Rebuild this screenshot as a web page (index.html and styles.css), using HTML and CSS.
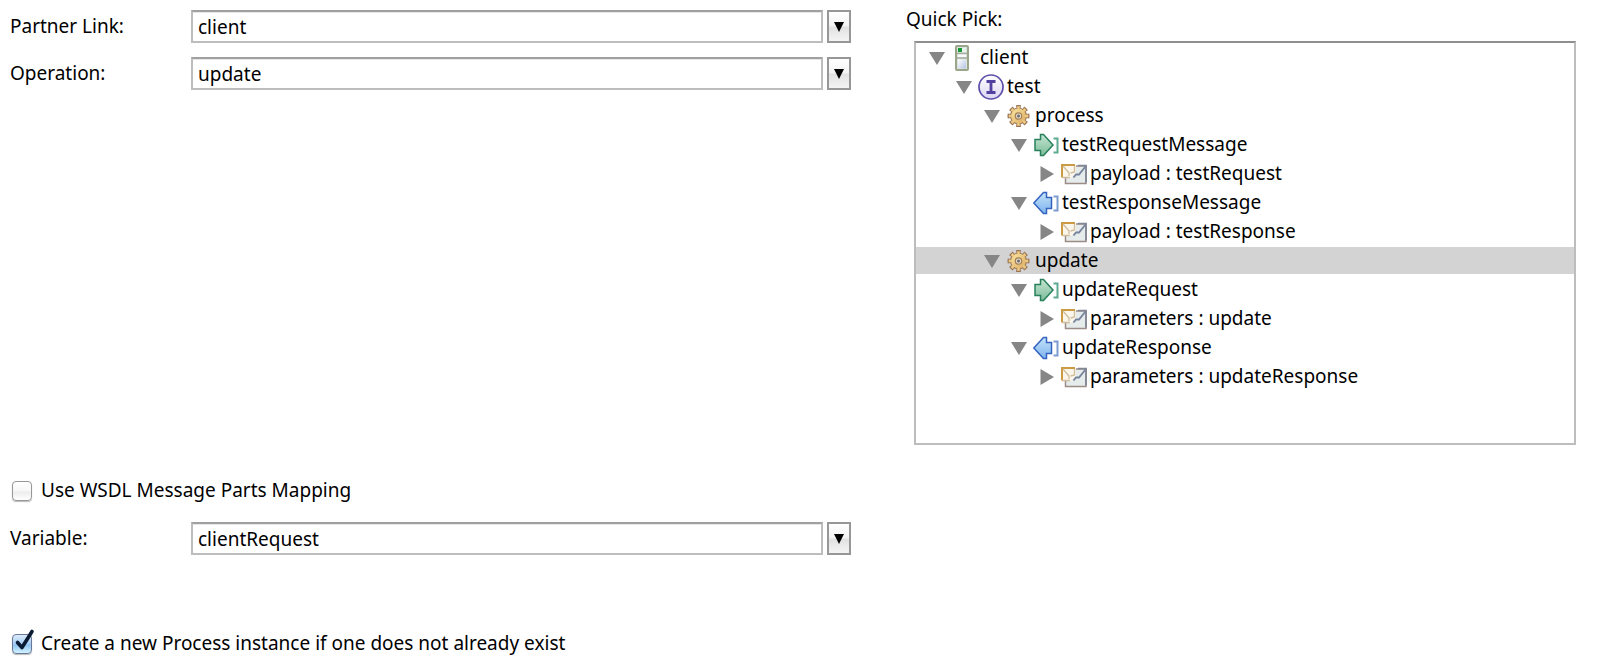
FILE: index.html
```html
<!DOCTYPE html>
<html lang="en">
<head>
<meta charset="utf-8">
<title>Receive Properties</title>
<link rel="stylesheet" href="styles.css">
</head>
<body>
<svg class="defs" aria-hidden="true">
  <defs>
    <linearGradient id="g-green" x1="0" y1="0" x2="0" y2="1"><stop offset="0" stop-color="#c4e4d0"/><stop offset="1" stop-color="#7dbd9b"/></linearGradient>
    <linearGradient id="g-blue" x1="0" y1="0" x2="0" y2="1"><stop offset="0" stop-color="#c3e3fa"/><stop offset="1" stop-color="#7fb2ee"/></linearGradient>
    <linearGradient id="g-gold" x1="0" y1="0" x2="1" y2="1"><stop offset="0" stop-color="#fbe9a6"/><stop offset="1" stop-color="#dba75c"/></linearGradient>
    <linearGradient id="g-lilac" x1="0" y1="0" x2="0" y2="1"><stop offset="0" stop-color="#ffffff"/><stop offset="1" stop-color="#dcd6f2"/></linearGradient>
    <linearGradient id="g-server" x1="0" y1="0" x2="1" y2="1"><stop offset="0" stop-color="#ffffff"/><stop offset="1" stop-color="#b4c3e4"/></linearGradient>
    <symbol id="open" viewBox="0 0 16 14"><path d="M0 1h16L8 14z" fill="#868686"/></symbol>
    <symbol id="closed" viewBox="0 0 16 16"><path d="M1.500 0v16l13.500-8z" fill="#868686"/></symbol>
    <symbol id="server" viewBox="0 0 26 26">
      <rect x="5" y="1" width="12" height="24" rx="1" fill="#dde3df" stroke="#9ba58a" stroke-width="2"/>
      <rect x="7" y="3" width="8" height="4" fill="#e9f2ed"/><rect x="7" y="3" width="4" height="4" fill="#179a36"/>
      <path d="M6 8.500h10M6 13h10" stroke="#a2ae9c" stroke-width="1.300"/>
      <rect x="7" y="9.500" width="8" height="2.500" fill="#f8faff"/>
      <rect x="7" y="14.500" width="8" height="9" fill="url(#g-server)"/>
    </symbol>
    <symbol id="interface" viewBox="0 0 26 26">
      <circle cx="13" cy="13" r="12" fill="url(#g-lilac)" stroke="#5c4faa" stroke-width="1.700"/>
      <path d="M8.500 7.500h9M8.500 18.500h9M13 7.500v11" fill="none" stroke="#51409f" stroke-width="2.800"/>
    </symbol>
    <symbol id="gear" viewBox="0 0 26 26">
      <circle cx="12.500" cy="13" r="9" pathLength="16" fill="none" stroke="#9b7355" stroke-width="4" stroke-dasharray="1.240 .760" stroke-dashoffset=".620"/>
      <circle cx="12.500" cy="13" r="8" fill="url(#g-gold)" stroke="#a37b58" stroke-width="1.200"/>
      <circle cx="12.500" cy="13" r="8.200" pathLength="16" fill="none" stroke="#ebca84" stroke-width="3.200" stroke-dasharray=".800 1.200" stroke-dashoffset=".400"/>
      <circle cx="12.500" cy="13" r="3.200" fill="#e6dccb" stroke="#a38158" stroke-width="1.200"/><circle cx="12.500" cy="13" r="1.500" fill="#6c6a6c"/>
    </symbol>
    <symbol id="request" viewBox="0 0 26 26">
      <path d="M2 7.500H7.500V2.500h3L20 13 10.500 23.500h-3v-5H2z" fill="url(#g-green)" stroke="#28815c" stroke-width="1.500"/>
      <path d="M20.500 6.500h4v14h-4" fill="none" stroke="#5caa90" stroke-width="2"/>
    </symbol>
    <symbol id="response" viewBox="0 0 26 26">
      <path d="M18.500 7.500h-5v-5h-3L.8 13l9.700 10.500h3v-5h5z" fill="url(#g-blue)" stroke="#3464c0" stroke-width="1.500"/>
      <path d="M20.500 6.500h4v14h-4" fill="none" stroke="#7c9cd0" stroke-width="2"/>
    </symbol>
    <symbol id="part" viewBox="0 0 26 26">
      <rect x="4.500" y="5" width="20.500" height="17.500" fill="#e6ebec" stroke="#9c8c86" stroke-width="1.500"/>
      <path d="M1 4h14v9l-5 4H1z" fill="#faf6ec"/>
      <path d="M1 16.500V4h13" fill="none" stroke="#cb9a42" stroke-width="2"/>
      <path d="M1 16.500h8M2 5l6 7v3M13.500 5v6l-4 1" fill="none" stroke="#d0bd9c" stroke-width="1.300"/>
      <path d="M17 4.500h8v17" fill="none" stroke="#7f8797" stroke-width="1.700"/>
      <path d="M24.500 5.500L18 13.500h-3l-2.500 3" fill="none" stroke="#77859c" stroke-width="1.900"/>
    </symbol>
  </defs>
</svg>
<main class="panel">
  <section class="fields">
    <div class="field">
      <label class="field-label" for="partner">Partner Link:</label>
      <div class="combo"><input class="combo-input" id="partner" type="text" value="client"><button class="combo-button" type="button" aria-label="Choose partner link"><svg class="chevron" viewBox="0 0 10 10"><path d="M0 0h10L5 10z"/></svg></button></div>
    </div>
    <div class="field">
      <label class="field-label" for="operation">Operation:</label>
      <div class="combo"><input class="combo-input" id="operation" type="text" value="update"><button class="combo-button" type="button" aria-label="Choose operation"><svg class="chevron" viewBox="0 0 10 10"><path d="M0 0h10L5 10z"/></svg></button></div>
    </div>
  </section>
  <section class="quick-pick">
    <h2 class="quick-title" id="quick">Quick Pick:</h2>
    <ul class="tree" role="tree" aria-labelledby="quick">
      <li class="node level-1" role="treeitem" aria-level="1"><svg class="toggle"><use href="#open"/></svg><svg class="icon"><use href="#server"/></svg><span>client</span></li>
      <li class="node level-2" role="treeitem" aria-level="2"><svg class="toggle"><use href="#open"/></svg><svg class="icon"><use href="#interface"/></svg><span>test</span></li>
      <li class="node level-3" role="treeitem" aria-level="3"><svg class="toggle"><use href="#open"/></svg><svg class="icon"><use href="#gear"/></svg><span>process</span></li>
      <li class="node level-4" role="treeitem" aria-level="4"><svg class="toggle"><use href="#open"/></svg><svg class="icon"><use href="#request"/></svg><span>testRequestMessage</span></li>
      <li class="node level-5" role="treeitem" aria-level="5"><svg class="toggle"><use href="#closed"/></svg><svg class="icon"><use href="#part"/></svg><span>payload : testRequest</span></li>
      <li class="node level-4" role="treeitem" aria-level="4"><svg class="toggle"><use href="#open"/></svg><svg class="icon"><use href="#response"/></svg><span>testResponseMessage</span></li>
      <li class="node level-5" role="treeitem" aria-level="5"><svg class="toggle"><use href="#closed"/></svg><svg class="icon"><use href="#part"/></svg><span>payload : testResponse</span></li>
      <li class="node level-3 selected" role="treeitem" aria-level="3" aria-selected="true"><svg class="toggle"><use href="#open"/></svg><svg class="icon"><use href="#gear"/></svg><span>update</span></li>
      <li class="node level-4" role="treeitem" aria-level="4"><svg class="toggle"><use href="#open"/></svg><svg class="icon"><use href="#request"/></svg><span>updateRequest</span></li>
      <li class="node level-5" role="treeitem" aria-level="5"><svg class="toggle"><use href="#closed"/></svg><svg class="icon"><use href="#part"/></svg><span>parameters : update</span></li>
      <li class="node level-4" role="treeitem" aria-level="4"><svg class="toggle"><use href="#open"/></svg><svg class="icon"><use href="#response"/></svg><span>updateResponse</span></li>
      <li class="node level-5" role="treeitem" aria-level="5"><svg class="toggle"><use href="#closed"/></svg><svg class="icon"><use href="#part"/></svg><span>parameters : updateResponse</span></li>
    </ul>
  </section>
  <section class="mapping">
    <label class="check"><span class="check-box"><input class="check-input" type="checkbox"></span>Use WSDL Message Parts Mapping</label>
    <div class="field variable">
      <label class="field-label" for="variable">Variable:</label>
      <div class="combo"><input class="combo-input" id="variable" type="text" value="clientRequest"><button class="combo-button" type="button" aria-label="Choose variable"><svg class="chevron" viewBox="0 0 10 10"><path d="M0 0h10L5 10z"/></svg></button></div>
    </div>
    <label class="check"><span class="check-box"><input class="check-input" type="checkbox" checked><svg class="tick" viewBox="0 0 22 24"><path d="M4.500 13.500L9 18.500 19 2.500" fill="none" stroke="#0b1a33" stroke-width="3.600" stroke-linecap="round" stroke-linejoin="round"/></svg></span>Create a new Process instance if one does not already exist</label>
  </section>
</main>
</body>
</html>
```
FILE: styles.css
```css
* { box-sizing: border-box; }
body {
  margin: 0;
  background: #fff;
  color: #000;
  font: 19px/27px "Noto Sans", "Open Sans", sans-serif;
}
.defs { position: absolute; width: 0; height: 0; }
.panel {
  display: grid;
  grid-template-columns: minmax(0, 841fr) minmax(0, 670fr);
  column-gap: 55px;
  row-gap: 32px;
  padding: 10px 24px 12px 10px;
}
.fields { display: flex; flex-direction: column; gap: 14px; }
.field { display: grid; grid-template-columns: 181px minmax(0, 1fr); align-items: start; }
.field-label { padding-top: 3px; }
.combo { display: flex; gap: 4px; }
.combo-input {
  flex: 1;
  min-width: 0;
  height: 33px;
  padding: 1px 5px 0;
  border: 2px solid #bdbdbd;
  border-top-color: #a0a0a0;
  border-radius: 0;
  background: #fff;
  box-shadow: inset 0 1px 0 #e6e6e6;
  color: inherit;
  font: inherit;
}
.combo-button {
  display: flex;
  align-items: center;
  justify-content: center;
  width: 24px;
  height: 33px;
  padding: 0;
  border: 2px solid #979797;
  background: linear-gradient(#fff, #f3f3f3 48%, #e1e1e1 52%, #f4f4f4);
}
.chevron { width: 10px; height: 10px; }
.quick-pick { margin-top: -4px; }
.quick-title { margin: 0; font-size: inherit; font-weight: 400; }
.tree {
  display: flex;
  flex-direction: column;
  gap: 2px;
  margin: 8px 0 0 8px;
  padding: 1px 0 53px;
  border: 2px solid #bdbdbd;
  border-top-color: #8f8f8f;
  list-style: none;
}
.node { display: flex; align-items: center; height: 27px; white-space: nowrap; }
.selected { background: #d3d3d3; }
.level-1 { padding-left: 13px; }
.level-2 { padding-left: 40px; }
.level-3 { padding-left: 68px; }
.level-4 { padding-left: 95px; }
.level-5 { padding-left: 123px; }
.toggle { flex: none; width: 16px; height: 16px; margin-right: 6px; }
.icon { flex: none; width: 26px; height: 26px; margin-right: 3px; }
.mapping { display: flex; flex-direction: column; align-items: stretch; }
.check { display: flex; align-items: center; gap: 9px; padding-left: 2px; }
.check-box { position: relative; display: flex; width: 20px; height: 20px; }
.check-input {
  appearance: none;
  width: 20px;
  height: 20px;
  margin: 0;
  border: 1px solid #979797;
  border-radius: 4px;
  background: linear-gradient(#fff, #f7f7f7 50%, #ececec 55%, #fff);
  box-shadow: 0 1px 1px #bbb;
}
.check-input:checked {
  border-color: #6b7897;
  background: linear-gradient(#dcecfb, #a5cdf3 50%, #8fc3f2 55%, #d2f3ff);
}
.tick { position: absolute; left: 1px; bottom: 1px; width: 22px; height: 24px; pointer-events: none; }
.variable { margin: 18px 0 75px; }
```
